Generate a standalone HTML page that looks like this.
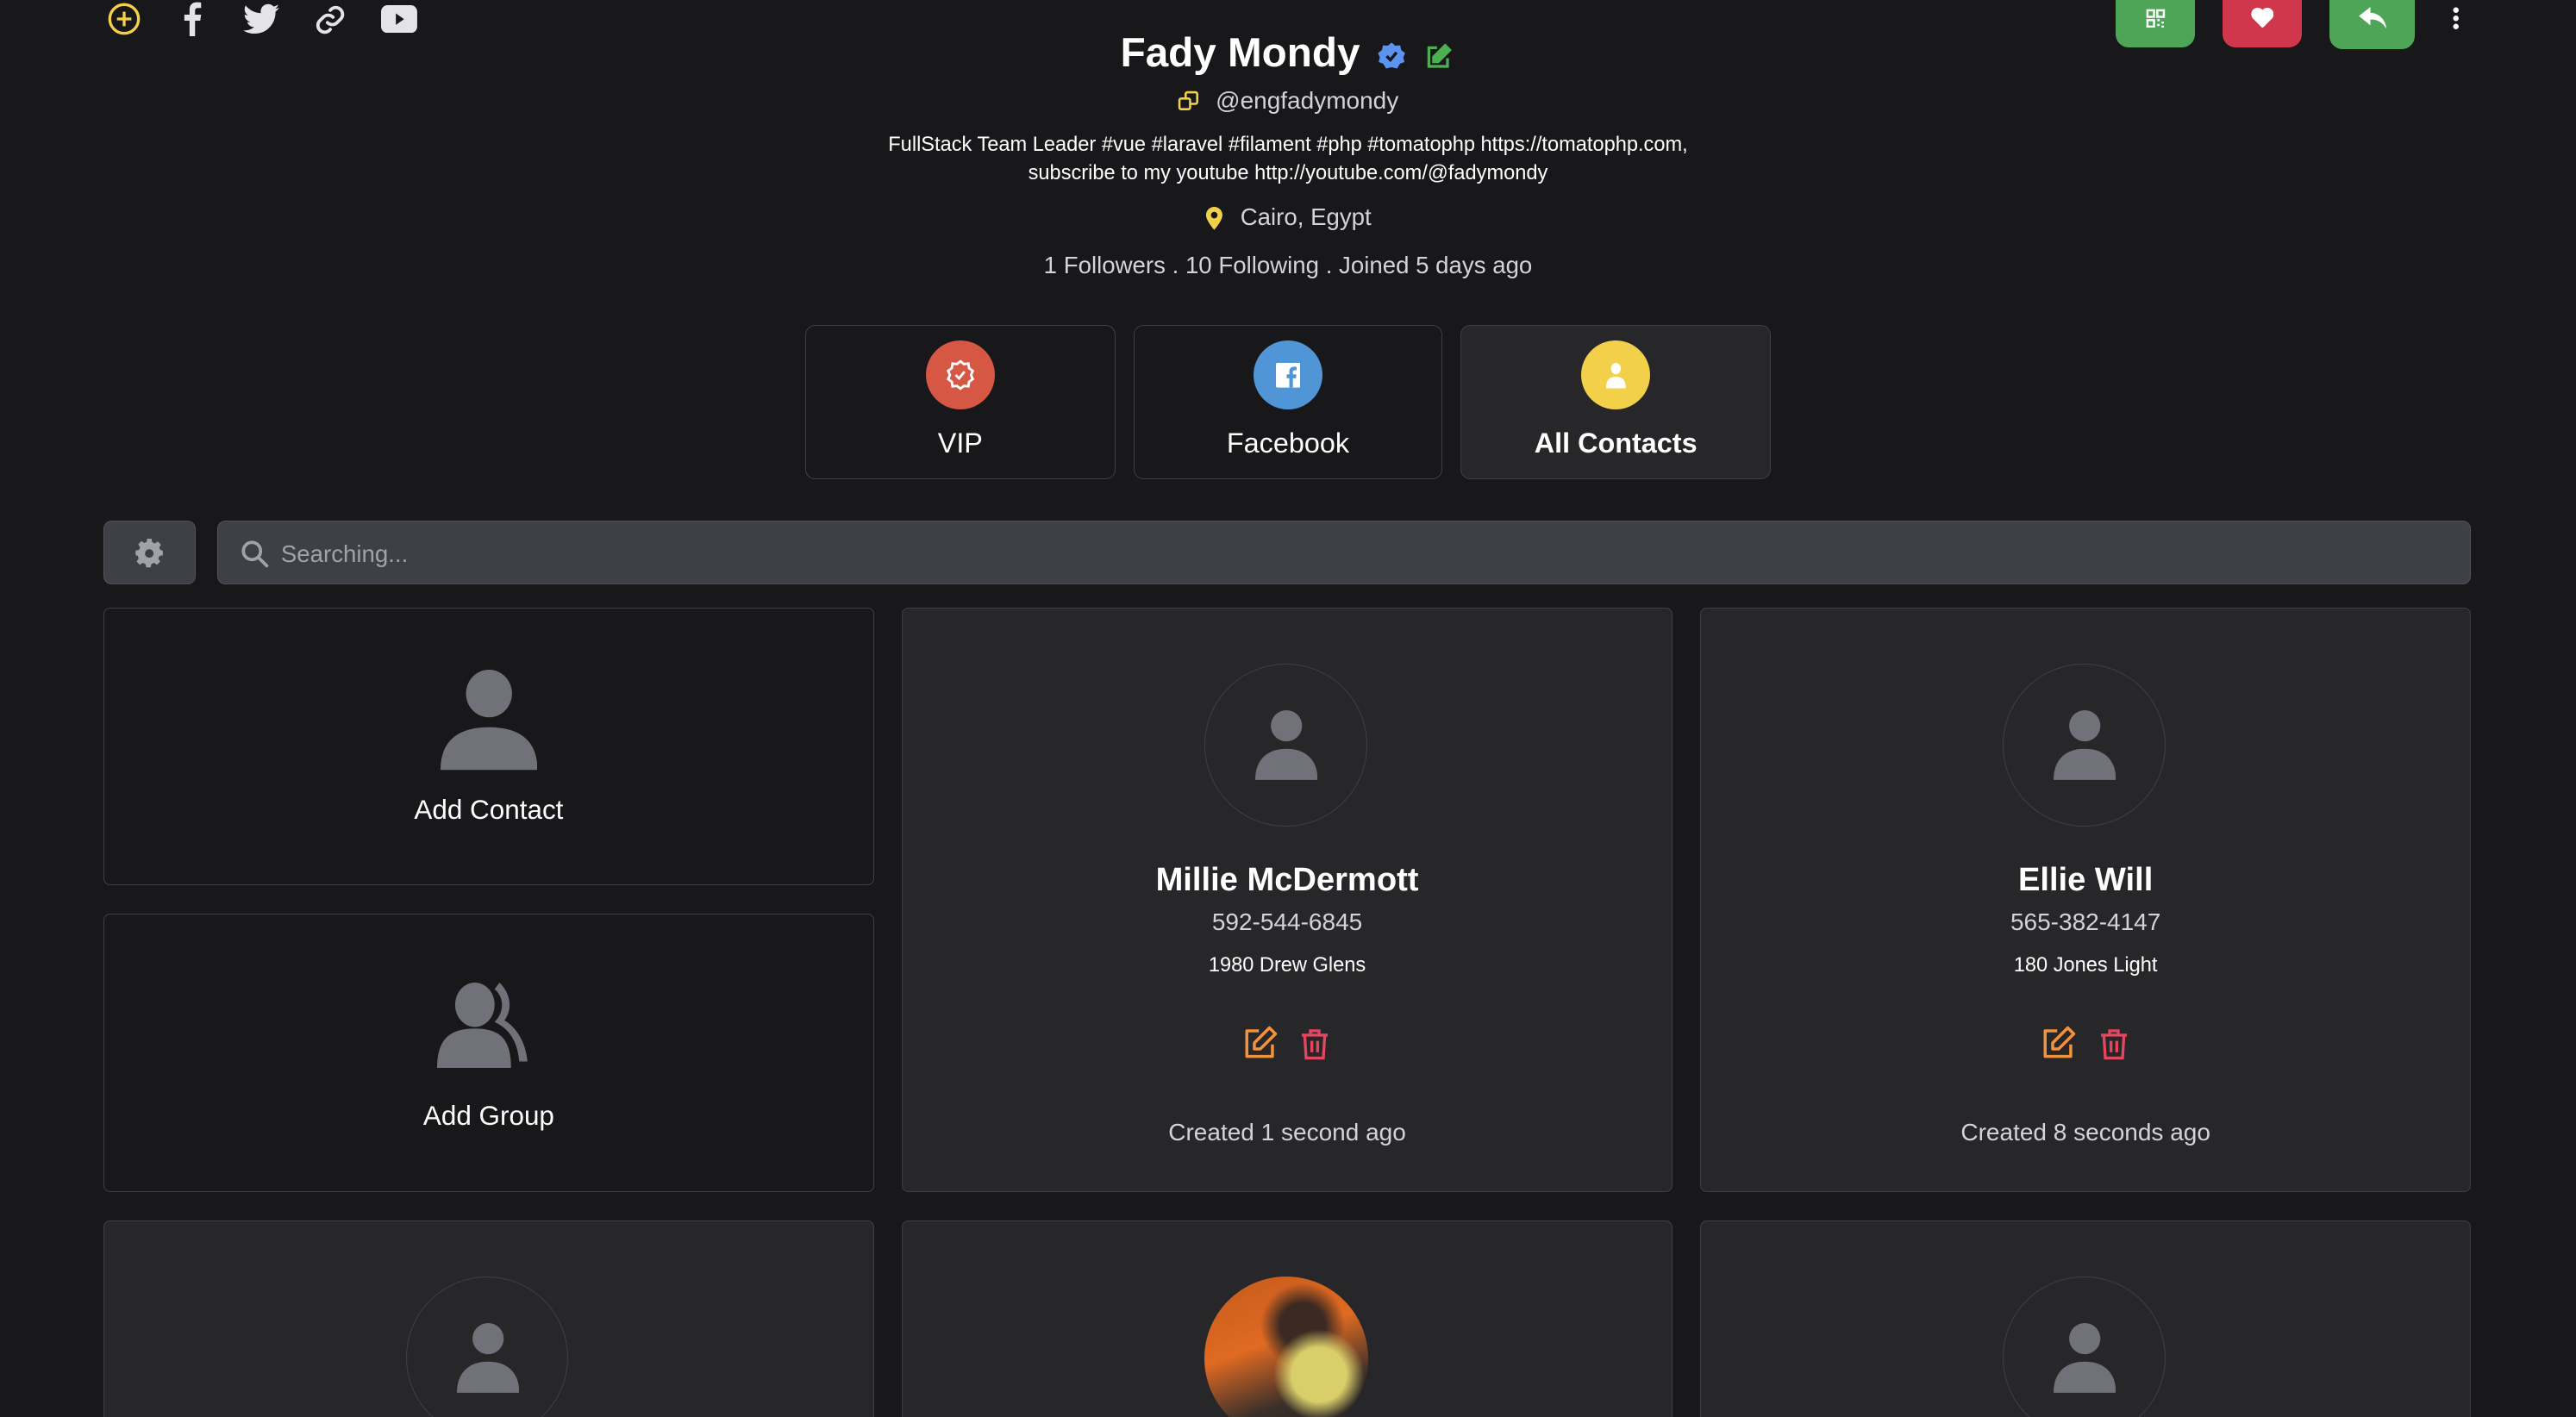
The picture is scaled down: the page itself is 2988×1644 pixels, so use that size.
<!DOCTYPE html>
<html><head><meta charset="utf-8"><style>
html,body{margin:0;padding:0;background:#18181b;overflow:hidden}
body{width:2988px;height:1644px}
#w{zoom:1.9056;position:relative;width:1568px;height:863px;font-family:"Liberation Sans",sans-serif;color:#fff}
.a{position:absolute}
.c{position:absolute;text-align:center;white-space:nowrap}
.card{position:absolute;border:1px solid #3f3f46;border-radius:4px;box-sizing:border-box}
.tab{position:absolute;top:198px;height:94px;border:1px solid #3f3f46;border-radius:6px;box-sizing:border-box;text-align:center}
.tab .ci{width:42px;height:42px;border-radius:50%;margin:9px auto 0;display:flex;align-items:center;justify-content:center}
.tab .l{font-size:17px;margin-top:11px}
.btn{position:absolute;top:-10px;border-radius:8px}
.av{position:absolute;width:98px;height:98px;border:1px solid #3f3f46;border-radius:50%}
</style></head><body><div id="w">
<svg class="a" style="left:65px;top:1px" width="21" height="21" viewBox="0 0 24 24" fill="none" stroke="#f2d04a" stroke-width="2"><circle cx="12" cy="12" r="10"/><path d="M12 7v10M7 12h10"/></svg>
<svg class="a" style="left:109px;top:1px" width="16" height="21" viewBox="0 0 10 20" fill="#e4e4e7"><path d="M6.5 20V11h3l.5-3.5H6.5V5.3c0-1 .3-1.7 1.8-1.7H10V.5C9.6.4 8.6.3 7.500.3 5 .3 3.300 1.800 3.300 4.600V7.500H.3V11h3v9z"/></svg>
<svg class="a" style="left:148px;top:2px" width="22" height="19" viewBox="0 0 24 20" fill="#e4e4e7"><path d="M24 2.4a10 10 0 0 1-2.8.8A5 5 0 0 0 23.300.500a10 10 0 0 1-3.100 1.200A4.900 4.900 0 0 0 11.800 6.100 14 14 0 0 1 1.700 1a4.900 4.900 0 0 0 1.500 6.600 4.900 4.900 0 0 1-2.200-.6 4.900 4.900 0 0 0 3.900 4.900 4.900 4.900 0 0 1-2.200.1 4.900 4.900 0 0 0 4.600 3.400A9.900 9.900 0 0 1 0 17.500 14 14 0 0 0 7.500 19.700c9.100 0 14-7.500 14-14v-.6A10 10 0 0 0 24 2.400z"/></svg>
<svg class="a" style="left:191px;top:2px" width="20" height="20" viewBox="0 0 24 24" fill="none" stroke="#e4e4e7" stroke-width="2.4" stroke-linecap="round"><path d="M10 14a5 5 0 0 0 7 0l3-3a5 5 0 0 0-7-7l-1 1"/><path d="M14 10a5 5 0 0 0-7 0l-3 3a5 5 0 0 0 7 7l1-1"/></svg>
<svg class="a" style="left:232px;top:3px" width="22" height="17" viewBox="0 0 22 17"><rect width="22" height="17" rx="4" fill="#e4e4e7"/><path d="M9 5v7l5-3.500z" fill="#18181b"/></svg>
<div class="btn" style="left:1288px;width:48px;height:39px;background:#4ea457"></div>
<svg class="a" style="left:1306px;top:5px" width="12" height="12" viewBox="0 0 12 12" fill="none" stroke="#fff" stroke-width="1.3"><rect x="1" y="1" width="4" height="4"/><rect x="7" y="1" width="4" height="4"/><rect x="1" y="7" width="4" height="4"/><path d="M7 7h1.500M9.500 8.500H11M7 10h1.500M9.500 11H11"/></svg>
<div class="btn" style="left:1353px;width:48px;height:39px;background:#d0374d"></div>
<svg class="a" style="left:1370px;top:4px" width="14" height="13" viewBox="0 0 24 22" fill="#fff"><path d="M12 22 2 12A6 6 0 0 1 12 3a6 6 0 0 1 10 9z"/></svg>
<div class="btn" style="left:1418px;width:52px;height:40px;background:#4ea457"></div>
<svg class="a" style="left:1436px;top:4px" width="17" height="14" viewBox="0 0 24 20" fill="#fff"><path d="M10 0 0 8l10 8v-5c6 0 10 2 14 8-1-7-5-13-14-14z"/></svg>
<svg class="a" style="left:1492px;top:3px" width="6" height="16" viewBox="0 0 6 16" fill="#fff"><circle cx="3" cy="3" r="1.700"/><circle cx="3" cy="8" r="1.700"/><circle cx="3" cy="13" r="1.700"/></svg>
<div class="c" style="left:682px;top:18px;font-size:25px;font-weight:bold">Fady Mondy</div>
<svg class="a" style="left:838px;top:25px" width="18" height="18" viewBox="0 0 24 24"><path d="M12 1l3 2.500 4-.3.800 3.800L23 9.500 21.500 13l1 3.800-3.700 1.300L16.500 22 12 21l-4.500 1-2.300-3.900L1.500 16.800l1-3.800L1 9.500 4.200 7l.8-3.800 4 .3z" fill="#5b93f0"/><path d="M8 12l3 3 5-6" stroke="#18181b" stroke-width="2.400" fill="none"/></svg>
<svg class="a" style="left:867px;top:26px" width="17" height="17" viewBox="0 0 24 24" fill="none" stroke="#4caf50" stroke-width="2.400"><path d="M11 4H4v16h16v-7"/><path d="M18 2l4 4-10 10H8v-4z" fill="#4caf50"/></svg>
<svg class="a" style="left:717px;top:55px" width="13" height="13" viewBox="0 0 24 24" fill="none" stroke="#f2d04a" stroke-width="2.500"><rect x="2" y="9" width="12" height="12" rx="2"/><path d="M9 9V4a2 2 0 0 1 2-2h9a2 2 0 0 1 2 2v9a2 2 0 0 1-2 2h-6"/></svg>
<div class="c" style="left:740px;top:53px;font-size:14.7px;color:#d4d4d8">@engfadymondy</div>
<div class="c" style="left:0;width:1568px;top:80px;font-size:12.4px;line-height:17px;color:#fff">FullStack Team Leader #vue #laravel #filament #php #tomatophp https://tomatophp.com,<br>subscribe to my youtube http://youtube.com/@fadymondy</div>
<svg class="a" style="left:733px;top:126px" width="12" height="14" viewBox="0 0 24 28" fill="#f2d04a"><path d="M12 0a10 10 0 0 0-10 10c0 7 10 18 10 18s10-11 10-18A10 10 0 0 0 12 0zm0 14a4 4 0 1 1 0-8 4 4 0 0 1 0 8z"/></svg>
<div class="c" style="left:755px;top:124px;font-size:14.5px;color:#d4d4d8">Cairo, Egypt</div>
<div class="c" style="left:0;width:1568px;top:153px;font-size:14.5px;color:#d4d4d8">1 Followers . 10 Following . Joined 5 days ago</div>
<div class="tab" style="left:490px;width:189px"><div class="ci" style="background:#d65744"><svg width="20" height="20" viewBox="0 0 24 24" fill="none" stroke="#fff" stroke-width="1.800"><path d="M12 2l2.500 2 3.300-.3.500 3.300L21 9l-1.300 3 1.300 3-2.700 2-.5 3.300-3.300-.3L12 22l-2.500-2-3.300.3-.5-3.300L3 15l1.300-3L3 9l2.700-2 .5-3.300 3.300.3z"/><path d="M8.500 12l2.500 2.500 4-5"/></svg></div><div class="l">VIP</div></div>
<div class="tab" style="left:690px;width:188px"><div class="ci" style="background:#5096d6"><svg width="15" height="15" viewBox="0 0 16 16"><rect width="16" height="16" rx="1" fill="#fff"/><path d="M11 16V10h2l.3-2.500H11V6c0-.7.2-1.200 1.200-1.200h1.200V2.600C13 2.500 12.400 2.500 11.700 2.500 10 2.500 8.700 3.500 8.700 5.500V7.500H7V10h1.700v6z" fill="#5096d6"/></svg></div><div class="l">Facebook</div></div>
<div class="tab" style="left:889px;width:189px;background:#27272a"><div class="ci" style="background:#f2d04a"><svg width="14" height="16" viewBox="0 0 14 16" fill="#fff"><ellipse cx="7" cy="4" rx="3" ry="3.500"/><path d="M1 16c0-5 2-7 6-7s6 2 6 7z"/></svg></div><div class="l" style="font-weight:bold">All Contacts</div></div>
<div class="a" style="left:63px;top:317px;width:56px;height:39px;background:#3f3f46;border:1px solid #52525b;border-radius:5px;box-sizing:border-box"></div>
<svg class="a" style="left:82px;top:328px" width="18" height="18" viewBox="0 0 24 24" fill="#a1a1aa"><path d="M10 1h4l.6 3 2.400 1.200 2.600-1.700 2.800 2.800-1.700 2.600L21.900 11l2.100.6v4l-3 .6-1 2.400 1.700 2.600-2.800 2.800-2.600-1.700-2.400 1-.6 3h-4l-.6-3-2.400-1-2.600 1.700-2.800-2.800 1.700-2.600L2 16.100 0 15.500v-4l3-.6 1-2.400L2.300 5.900 5.100 3.100l2.600 1.700L10 3.600z" transform="scale(.92) translate(1,-1)"/><circle cx="12" cy="12" r="3.500" fill="#3f3f46"/></svg>
<div class="a" style="left:132px;top:317px;width:1372px;height:39px;background:#3f3f46;border:1px solid #52525b;border-radius:5px;box-sizing:border-box"></div>
<svg class="a" style="left:146px;top:328px" width="18" height="18" viewBox="0 0 24 24" fill="none" stroke="#a1a1aa" stroke-width="2.600" stroke-linecap="round"><circle cx="10" cy="10" r="7"/><path d="M15 15l7 7"/></svg>
<div class="c" style="left:171px;top:329px;font-size:14.5px;color:#a1a1aa">Searching...</div>
<div class="card" style="left:63px;top:370px;width:469px;height:169px"></div>
<svg class="a" style="left:268px;top:408px" width="59" height="61" viewBox="0 0 59 61" fill="#71717a"><ellipse cx="29.500" cy="14.500" rx="14" ry="14.500"/><path d="M0 61c0-18 11-26 29.500-26S59 43 59 61z"/></svg>
<div class="c" style="left:63px;width:469px;top:484px;font-size:16.5px">Add Contact</div>
<div class="card" style="left:63px;top:556px;width:469px;height:170px"></div>
<svg class="a" style="left:266px;top:598px" width="60" height="52" viewBox="0 0 60 52"><ellipse cx="23" cy="13.500" rx="12" ry="13.500" fill="#71717a"/><path d="M0 52c0-18 8-24 23-24s22 6 22 24z" fill="#71717a"/><path d="M35 4c6 5 6 14 0 20 9 4 14 12 15 24h5C54 36 48 27 41 23 46 16 45 7 38 0z" fill="#71717a"/></svg>
<div class="c" style="left:63px;width:469px;top:670px;font-size:16.5px">Add Group</div>
<div class="card" style="left:549px;top:370px;width:469px;height:356px;background:#27272a"></div>
<div class="av" style="left:733px;top:404px"></div>
<svg class="a" style="left:764px;top:432px" width="38" height="43" viewBox="0 0 38 43" fill="#71717a"><circle cx="19" cy="10" r="9.500"/><path d="M0 43c0-13 8-19 19-19s19 6 19 19z"/></svg>
<div class="c" style="left:549px;width:469px;top:525px;font-size:20px;font-weight:bold">Millie McDermott</div>
<div class="c" style="left:549px;width:469px;top:553px;font-size:14.7px;color:#d4d4d8">592-544-6845</div>
<div class="c" style="left:549px;width:469px;top:581px;font-size:12.4px">1980 Drew Glens</div>
<svg class="a" style="left:756px;top:624px" width="22" height="22" viewBox="0 0 24 24" fill="none" stroke="#f0923e" stroke-width="2" stroke-linejoin="round"><path d="M11 4H3v17h17v-8"/><path d="M18 2l4 4-10 10H8v-4z"/></svg>
<svg class="a" style="left:790px;top:624px" width="21" height="23" viewBox="0 0 24 24" fill="none" stroke="#e4465e" stroke-width="2"><path d="M3 6h18M9 6V3h6v3M5 6l1 16h12l1-16M10 10v8M14 10v8"/></svg>
<div class="c" style="left:549px;width:469px;top:681px;font-size:14.7px;color:#d4d4d8">Created 1 second ago</div>
<div class="card" style="left:1035px;top:370px;width:469px;height:356px;background:#27272a"></div>
<div class="av" style="left:1219px;top:404px"></div>
<svg class="a" style="left:1250px;top:432px" width="38" height="43" viewBox="0 0 38 43" fill="#71717a"><circle cx="19" cy="10" r="9.500"/><path d="M0 43c0-13 8-19 19-19s19 6 19 19z"/></svg>
<div class="c" style="left:1035px;width:469px;top:525px;font-size:20px;font-weight:bold">Ellie Will</div>
<div class="c" style="left:1035px;width:469px;top:553px;font-size:14.7px;color:#d4d4d8">565-382-4147</div>
<div class="c" style="left:1035px;width:469px;top:581px;font-size:12.4px">180 Jones Light</div>
<svg class="a" style="left:1242px;top:624px" width="22" height="22" viewBox="0 0 24 24" fill="none" stroke="#f0923e" stroke-width="2" stroke-linejoin="round"><path d="M11 4H3v17h17v-8"/><path d="M18 2l4 4-10 10H8v-4z"/></svg>
<svg class="a" style="left:1276px;top:624px" width="21" height="23" viewBox="0 0 24 24" fill="none" stroke="#e4465e" stroke-width="2"><path d="M3 6h18M9 6V3h6v3M5 6l1 16h12l1-16M10 10v8M14 10v8"/></svg>
<div class="c" style="left:1035px;width:469px;top:681px;font-size:14.7px;color:#d4d4d8">Created 8 seconds ago</div>
<div class="card" style="left:63px;top:743px;width:469px;height:140px;background:#27272a"></div>
<div class="av" style="left:247px;top:777px"></div>
<svg class="a" style="left:278px;top:805px" width="38" height="43" viewBox="0 0 38 43" fill="#71717a"><circle cx="19" cy="10" r="9.500"/><path d="M0 43c0-13 8-19 19-19s19 6 19 19z"/></svg>
<div class="card" style="left:549px;top:743px;width:469px;height:140px;background:#27272a"></div>
<div class="av" style="left:733px;top:777px;overflow:hidden;border:none;width:100px;height:100px;background:radial-gradient(circle at 70% 60%,#d9cf6a 0 18%,transparent 30%),radial-gradient(circle at 60% 30%,#3a2a22 0 15%,transparent 28%),linear-gradient(160deg,#c45a1c 0%,#e06a22 40%,#3a2f2a 70%,#222 100%)"></div>
<div class="card" style="left:1035px;top:743px;width:469px;height:140px;background:#27272a"></div>
<div class="av" style="left:1219px;top:777px"></div>
<svg class="a" style="left:1250px;top:805px" width="38" height="43" viewBox="0 0 38 43" fill="#71717a"><circle cx="19" cy="10" r="9.500"/><path d="M0 43c0-13 8-19 19-19s19 6 19 19z"/></svg>
</div></body></html>
